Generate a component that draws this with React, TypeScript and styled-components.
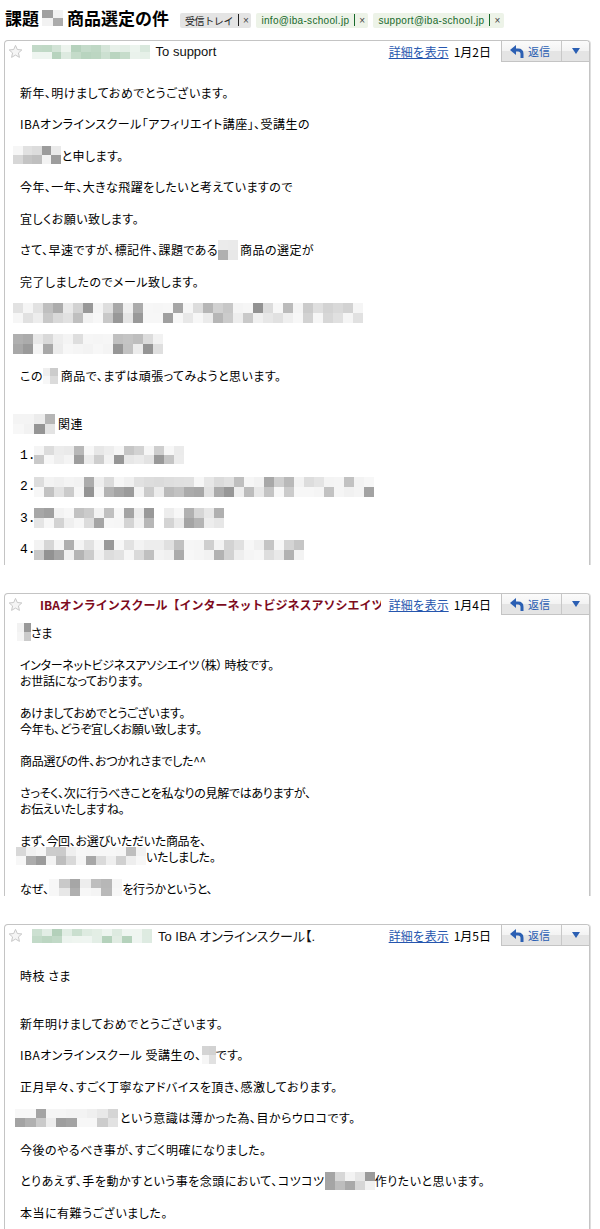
import React from 'react';
import styled, { createGlobalStyle } from 'styled-components';

const GlobalStyle = createGlobalStyle`
  html, body {
    margin: 0;
    padding: 0;
    background: #fff;
    overflow: hidden;
  }
  body {
    font-family: "Noto Sans CJK JP", "Noto Sans", sans-serif;
    color: #000;
  }
`;

const Page = styled.div`
  width: 600px;
  padding-left: 4px;
  box-sizing: border-box;
`;

const TitleRow = styled.div`
  display: flex;
  align-items: center;
  height: 40px;
  padding: 0 0 4px 1px;
  box-sizing: border-box;
`;

const Title = styled.h1`
  display: flex;
  align-items: center;
  margin: 0;
  font-size: 17px;
  font-weight: 700;
  line-height: 20px;
  white-space: nowrap;
`;

const Labels = styled.div`
  display: flex;
  gap: 5px;
  margin: 4px 0 0 11px;
`;

const Label = styled.span<{ $green?: boolean }>`
  display: inline-flex;
  align-items: center;
  height: 15px;
  padding: 0 3px 0 5px;
  border-radius: 2px;
  background: ${(p) => (p.$green ? '#edf3e8' : '#e4e4e4')};
  color: ${(p) => (p.$green ? '#17692b' : '#222')};
  font-family: ${(p) => (p.$green ? '"Liberation Sans", sans-serif' : '"Noto Sans CJK JP", sans-serif')};
  font-size: 10px;
  letter-spacing: ${(p) => (p.$green ? '0.3px' : '-0.4px')};
  white-space: nowrap;
`;

const LabelSep = styled.span`
  width: 1px;
  height: 12px;
  margin: 0 4px 0 5px;
  background: currentColor;
`;

const LabelClose = styled.span`
  font-family: "Liberation Sans", sans-serif;
  font-size: 10px;
  color: #444;
`;

const Card = styled.section`
  width: 586px;
  box-sizing: border-box;
  border: 1px solid #c4c4c4;
  border-bottom: none;
  border-radius: 4px 4px 0 0;
  box-shadow: 1px 0 0 #dedede;
  margin-bottom: 28px;
  overflow: hidden;
`;

const CardHead = styled.header`
  display: flex;
  align-items: center;
  height: 21px;
`;

const StarBox = styled.span`
  display: flex;
  margin-left: 3px;
  width: 15px;
  height: 15px;
  flex-shrink: 0;
`;

const Sender = styled.div<{ $inset: number }>`
  display: flex;
  align-items: center;
  flex: 1;
  min-width: 0;
  margin: 0 8px 0 ${(p) => p.$inset}px;
  overflow: hidden;
  white-space: nowrap;
  font-family: "Liberation Sans", "Noto Sans CJK JP", sans-serif;
  font-size: 13px;
  color: #111;
`;

const SenderName = styled.span`
  font-family: "Noto Sans CJK JP", sans-serif;
  font-size: 12px;
  font-weight: 700;
  color: #7d0b1d;
`;

const Recipient = styled.span`
  margin-left: 6px;
  font-feature-settings: "palt";
`;

const Details = styled.a`
  color: #2656ae;
  text-decoration: underline;
  font-size: 12px;
  white-space: nowrap;
  cursor: pointer;
`;

const DateText = styled.span`
  margin-left: 5px;
  font-size: 12px;
  white-space: nowrap;
`;

const ReplyGroup = styled.div`
  display: flex;
  align-self: flex-start;
  height: 20px;
  margin-left: 10px;
  border-left: 1px solid #c4c4c4;
  border-bottom: 1px solid #c4c4c4;
  background: linear-gradient(#fbfbfb 0, #f3f3f3 48%, #e4e4e4 52%, #e4e4e4 100%);
`;

const ReplyButton = styled.button`
  display: flex;
  align-items: center;
  gap: 4px;
  width: 60px;
  padding: 0 0 0 8px;
  border: none;
  border-right: 1px solid #c8c8c8;
  background: transparent;
  color: #2b5fb3;
  font-family: "Noto Sans CJK JP", sans-serif;
  font-size: 11px;
  cursor: pointer;
`;

const MoreButton = styled.button`
  display: flex;
  align-items: center;
  justify-content: center;
  width: 27px;
  padding: 0;
  border: none;
  background: transparent;
  cursor: pointer;
`;

const Body = styled.div<{ $top: number; $bottom: number; $track: number }>`
  display: flex;
  flex-direction: column;
  padding: ${(p) => p.$top}px 0 ${(p) => p.$bottom}px 15px;
  font-size: 12px;
  font-feature-settings: "palt";
  letter-spacing: ${(p) => p.$track}px;
`;

const Para = styled.p<{ $gap?: number }>`
  display: flex;
  align-items: center;
  height: 16px;
  margin: ${(p) => p.$gap ?? 0}px 0 15.5px;
  white-space: nowrap;
  &:last-child {
    margin-bottom: 0;
  }
`;

const Line = styled.div`
  display: flex;
  align-items: center;
  height: 16px;
  white-space: nowrap;
`;

const Blank = styled.div`
  height: 16px;
`;

const ItemNo = styled.span`
  width: 14px;
  font-family: "Liberation Mono", monospace;
  font-size: 13px;
  letter-spacing: 0;
`;

const MosaicGrid = styled.span<{ $cols: number; $cw: number; $ch: number; $shift: number; $space: number }>`
  display: inline-grid;
  grid-template-columns: repeat(${(p) => p.$cols}, ${(p) => p.$cw}px);
  grid-auto-rows: ${(p) => p.$ch}px;
  flex-shrink: 0;
  margin-left: ${(p) => p.$shift}px;
  margin-right: ${(p) => p.$space}px;
`;

const Cell = styled.span`
  display: block;
`;

type BlurProps = {
  cols: number;
  cw?: number;
  rows?: number;
  ch?: number;
  seed: number;
  green?: boolean;
  shift?: number;
  space?: number;
};

const Blur = ({ cols, cw = 10, rows = 2, ch = 10, seed, green, shift = 0, space = 0 }: BlurProps) => {
  let s = seed * 7919 + 13;
  const rand = () => {
    s = (s * 9301 + 49297) % 233280;
    return s / 233280;
  };
  const cells = Array.from({ length: cols * rows }, (_, i) => {
    const r = rand();
    const l = green ? 95 - Math.pow(r, 1.6) * 20 : 97 - Math.pow(r, 2.3) * 40;
    const color = green ? `hsl(135, 24%, ${l}%)` : `hsl(0, 0%, ${l}%)`;
    return <Cell key={i} style={{ background: color }} />;
  });
  return (
    <MosaicGrid $cols={cols} $cw={cw} $ch={ch} $shift={shift} $space={space}>
      {cells}
    </MosaicGrid>
  );
};

const Star = () => (
  <StarBox>
    <svg width="15" height="15" viewBox="0 0 24 24">
      <path
        d="M12 2.2l2.9 6.6 7.2.7-5.4 4.8 1.6 7.1L12 17.7l-6.3 3.7 1.6-7.1-5.4-4.8 7.2-.7z"
        fill="#f5f5f5"
        stroke="#c4c4c4"
        strokeWidth="1.5"
        strokeLinejoin="round"
      />
    </svg>
  </StarBox>
);

const ReplyIcon = () => (
  <svg width="14" height="13" viewBox="0 0 14 13">
    <path d="M0 5L6 0V10Z" fill="#2b5fb3" />
    <path d="M5 5H8Q12 5 12 9V13" fill="none" stroke="#2b5fb3" strokeWidth="3" />
  </svg>
);

const HeadRight = ({ date }: { date: string }) => (
  <>
    <Details>詳細を表示</Details>
    <DateText>{date}</DateText>
    <ReplyGroup>
      <ReplyButton>
        <ReplyIcon />
        返信
      </ReplyButton>
      <MoreButton>
        <svg width="8" height="6" viewBox="0 0 8 6">
          <path d="M0 0H8L4 6Z" fill="#2b5fb3" />
        </svg>
      </MoreButton>
    </ReplyGroup>
  </>
);

export default function App() {
  return (
    <Page>
      <GlobalStyle />
      <TitleRow>
        <Title>
          課題
          <Blur cols={2} cw={10.5} ch={8} seed={3} shift={3} space={4} />
          商品選定の件
        </Title>
        <Labels>
          <Label>
            受信トレイ
            <LabelSep />
            <LabelClose>×</LabelClose>
          </Label>
          <Label $green>
            info@iba-school.jp
            <LabelSep />
            <LabelClose>×</LabelClose>
          </Label>
          <Label $green>
            support@iba-school.jp
            <LabelSep />
            <LabelClose>×</LabelClose>
          </Label>
        </Labels>
      </TitleRow>

      <Card>
        <CardHead>
          <Star />
          <Sender $inset={9}>
            <Blur cols={12} cw={9.8} ch={7} seed={11} green />
            <Recipient>To support</Recipient>
          </Sender>
          <HeadRight date="1月2日" />
        </CardHead>
        <Body $top={22} $bottom={7.5} $track={0.45}>
          <Para>新年、明けましておめでとうございます。</Para>
          <Para>IBAオンラインスクール「アフィリエイト講座」、受講生の</Para>
          <Para>
            <Blur cols={5} cw={9.5} ch={9} seed={21} shift={-7} space={1} />
            と申します。
          </Para>
          <Para>今年、一年、大きな飛躍をしたいと考えていますので</Para>
          <Para>宜しくお願い致します。</Para>
          <Para>
            さて、早速ですが、標記件、課題である
            <Blur cols={2} ch={10} seed={5} space={2} />
            商品の選定が
          </Para>
          <Para>完了しましたのでメール致します。</Para>
          <Para>
            <Blur cols={35} ch={10} seed={31} shift={-7} />
          </Para>
          <Para>
            <Blur cols={15} ch={10} seed={41} shift={-7} />
          </Para>
          <Para>
            この
            <Blur cols={2} cw={7.5} ch={8} seed={9} space={3} />
            商品で、まずは頑張ってみようと思います。
          </Para>
          <Para $gap={16.5}>
            <Blur cols={4} cw={10.5} ch={10} seed={17} shift={-7} space={3} />
            関連
          </Para>
          <Para>
            <ItemNo>1.</ItemNo>
            <Blur cols={15} ch={9} seed={51} />
          </Para>
          <Para>
            <ItemNo>2.</ItemNo>
            <Blur cols={34} ch={10} seed={61} />
          </Para>
          <Para>
            <ItemNo>3.</ItemNo>
            <Blur cols={12} ch={10} seed={71} space={10} />
            <Blur cols={6} ch={10} seed={73} />
          </Para>
          <Para>
            <ItemNo>4.</ItemNo>
            <Blur cols={27} ch={10} seed={81} />
          </Para>
        </Body>
      </Card>

      <Card>
        <CardHead>
          <Star />
          <Sender $inset={17}>
            <SenderName>IBAオンラインスクール【インターネットビジネスアソシエイツ</SenderName>
          </Sender>
          <HeadRight date="1月4日" />
        </CardHead>
        <Body $top={9} $bottom={0} $track={-0.3}>
          <Line>
            <Blur cols={2} cw={7} ch={9} seed={13} shift={-3} />
            さま
          </Line>
          <Blank />
          <Line>インターネットビジネスアソシエイツ（株） 時枝です。</Line>
          <Line>お世話になっております。</Line>
          <Blank />
          <Line>あけましておめでとうございます。</Line>
          <Line>今年も、どうぞ宜しくお願い致します。</Line>
          <Blank />
          <Line>商品選びの件、おつかれさまでした^^</Line>
          <Blank />
          <Line>さっそく、次に行うべきことを私なりの見解ではありますが、</Line>
          <Line>お伝えいたしますね。</Line>
          <Blank />
          <Line>まず、今回、お選びいただいた商品を、</Line>
          <Line>
            <Blur cols={13} ch={9} seed={91} shift={-4} />
            いたしました。
          </Line>
          <Blank />
          <Line>
            なぜ、
            <Blur cols={7} cw={10.5} ch={9} seed={97} />
            を行うかというと、
          </Line>
        </Body>
      </Card>

      <Card>
        <CardHead>
          <Star />
          <Sender $inset={9}>
            <Blur cols={12} ch={7} seed={19} green />
            <Recipient>To IBA オンラインスクール【.</Recipient>
          </Sender>
          <HeadRight date="1月5日" />
        </CardHead>
        <Body $top={21} $bottom={20} $track={0.5}>
          <Para>時枝 さま</Para>
          <Para $gap={16.5}>新年明けましておめでとうございます。</Para>
          <Para>
            IBAオンラインスクール 受講生の、
            <Blur cols={2} cw={7} ch={9} seed={23} />
            です。
          </Para>
          <Para>正月早々、すごく丁寧なアドバイスを頂き、感激しております。</Para>
          <Para>
            <Blur cols={10} cw={10.3} ch={9} seed={29} shift={-5} space={2} />
            という意識は薄かった為、目からウロコです。
          </Para>
          <Para>今後のやるべき事が、すごく明確になりました。</Para>
          <Para>
            とりあえず、手を動かすという事を念頭において、コツコツ
            <Blur cols={5} ch={9} seed={37} />
            作りたいと思います。
          </Para>
          <Para>本当に有難うございました。</Para>
        </Body>
      </Card>
    </Page>
  );
}
